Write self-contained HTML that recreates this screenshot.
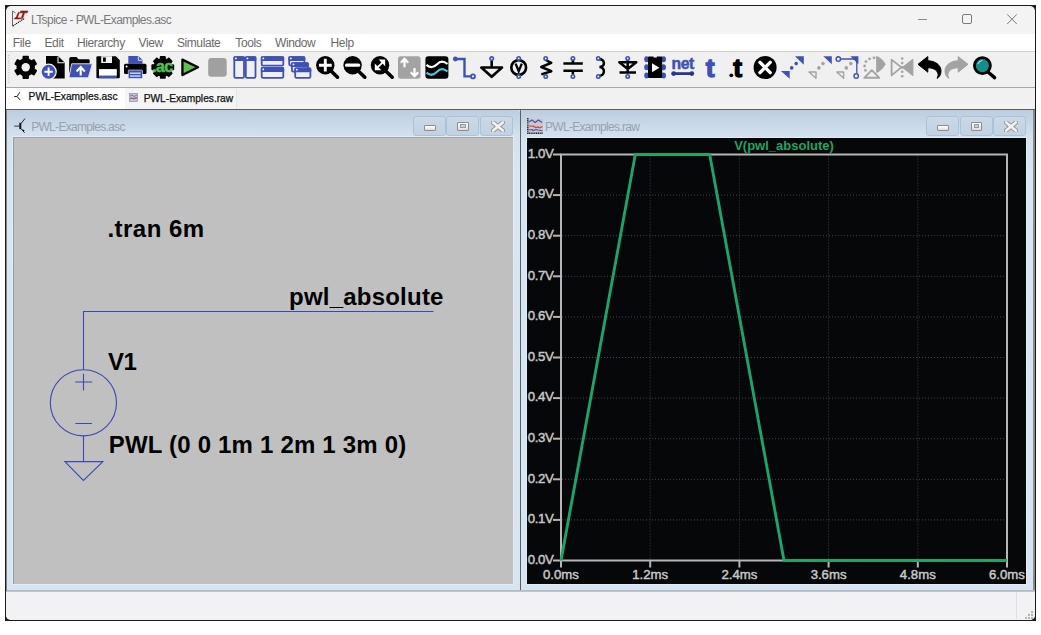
<!DOCTYPE html>
<html><head><meta charset="utf-8">
<style>
*{margin:0;padding:0;box-sizing:border-box}
html,body{width:1041px;height:635px;overflow:hidden;background:#fff;font-family:"Liberation Sans",sans-serif;position:relative}
.a{position:absolute}
.t{position:absolute;white-space:nowrap;line-height:1}
</style></head>
<body>
<!-- window frame -->
<div class="a" style="left:5px;top:5px;width:1031px;height:616px;background:#1c1c1c"></div>
<div class="a" style="left:6px;top:6px;width:1029px;height:614px;border-radius:5px;background:#f3f3f4"></div>
<div class="a" style="left:6px;top:34px;width:1029px;height:17px;background:#fff"></div>
<div class="a" style="left:6px;top:51px;width:1029px;height:1px;background:#d0d0d0"></div>
<div class="a" style="left:6px;top:52px;width:1029px;height:35px;background:#f0f0f0"></div>
<div class="a" style="left:6px;top:87px;width:1029px;height:1px;background:#a8a8a8"></div>
<div class="a" style="left:6px;top:88px;width:1029px;height:21px;background:#f1f1f1"></div>
<div class="a" style="left:6px;top:88px;width:119px;height:21px;background:#fefefe"></div>
<div class="a" style="left:125px;top:89px;width:112px;height:20px;background:#f5f5f5;border-right:1px solid #e6e6e6"></div>
<div class="a" style="left:6px;top:109px;width:1029px;height:1px;background:#5c5c5c"></div>
<!-- mdi children -->
<div class="a" style="left:6px;top:110px;width:514px;height:481px;background:linear-gradient(#bccde0 0px,#c9d8e8 14px,#d4e2f0 27px,#d8e6f4 60px,#d7e5f3);border-radius:2px 2px 0 0"></div>
<div class="a" style="left:520px;top:110px;width:1px;height:481px;background:#5e5e5e"></div>
<div class="a" style="left:521px;top:110px;width:513px;height:481px;background:linear-gradient(#bccde0 0px,#c9d8e8 14px,#d4e2f0 27px,#d8e6f4 60px,#d7e5f3);border-radius:2px 2px 0 0"></div>
<div class="a" style="left:1033px;top:110px;width:2px;height:481px;background:#8a8a8a"></div>
<div class="a" style="left:6px;top:590px;width:1029px;height:2px;background:linear-gradient(#aeb6be,#c6c9cc)"></div>
<div class="a" style="left:12px;top:136px;width:502px;height:449px;background:#e2ecf6"></div>
<div class="a" style="left:13px;top:137px;width:500px;height:447px;background:#c0c0c0;border-top:1px solid #a2a2a2;border-left:1px solid #999999"></div>
<div class="a" style="left:6px;top:110px;width:1px;height:481px;background:#858585"></div>
<div class="a" style="left:526px;top:137px;width:501px;height:448px;background:#e2ecf6"></div>
<div class="a" style="left:527px;top:138px;width:499px;height:446px;background:#050709"></div>
<!-- status bar -->
<div class="a" style="left:6px;top:592px;width:1029px;height:28px;background:#f2f2f4;border-radius:0 0 5px 5px"></div>
<div class="a" style="left:1016px;top:592px;width:1px;height:27px;background:#e0e0e0"></div><div class="a" style="left:1031px;top:611px;width:2px;height:2px;background:#b4b4b4"></div><div class="a" style="left:1028px;top:614px;width:2px;height:2px;background:#b4b4b4"></div><div class="a" style="left:1031px;top:614px;width:2px;height:2px;background:#b4b4b4"></div><div class="a" style="left:1025px;top:617px;width:2px;height:2px;background:#b4b4b4"></div><div class="a" style="left:1028px;top:617px;width:2px;height:2px;background:#b4b4b4"></div><div class="a" style="left:1031px;top:617px;width:2px;height:2px;background:#b4b4b4"></div>
<!-- title bar -->
<svg class="a" style="left:0;top:0" width="40" height="40">
  <path d="M12.5 26.3 V11 L15.6 13" fill="none" stroke="#6a6a6a" stroke-width="1"/>
  <path d="M12.8 26 L24.6 18.3" fill="none" stroke="#111" stroke-width="1.1" stroke-dasharray="1.3 0.7"/>
  <path d="M18.9 11.9 Q17.2 13.5 16.6 16.5 L14.2 18.9 L20.8 18.9 L21.2 17.9 L17.6 17.9 Q18.2 14.5 19.6 12.6 Z" fill="#9c1212" stroke="#9c1212" stroke-width="0.6" stroke-linejoin="round"/>
  <path d="M20.6 11 L28 11 L27.2 12.8 L24.6 12.8 L22.8 18.3 L21.3 18.3 L23.1 12.8 L20 12.8 Z" fill="#9c1212" stroke="#9c1212" stroke-width="0.6" stroke-linejoin="round"/>
</svg>
<div class="t" style="left:31px;top:14px;font-size:12px;color:#7a7a7a;letter-spacing:-0.58px">LTspice - PWL-Examples.asc</div>
<div class="a" style="left:917.5px;top:18.6px;width:9.5px;height:1px;background:#8a8a8a"></div>
<div class="a" style="left:962px;top:14px;width:9.6px;height:9.6px;border:1px solid #7a7a7a;border-radius:2px"></div>
<svg class="a" style="left:1006px;top:13px" width="12" height="12"><path d="M1.2 1.4 L10.8 11 M10.8 1.4 L1.2 11" stroke="#7a7a7a" stroke-width="1"/></svg>
<!-- menu -->
<div class="t" style="left:12.7px;top:36.6px;font-size:12px;color:#6a6a6a;letter-spacing:-0.3px">File</div>
<div class="t" style="left:44.4px;top:36.6px;font-size:12px;color:#6a6a6a;letter-spacing:-0.3px">Edit</div>
<div class="t" style="left:77px;top:36.6px;font-size:12px;color:#6a6a6a;letter-spacing:-0.4px">Hierarchy</div>
<div class="t" style="left:138.6px;top:36.6px;font-size:12px;color:#6a6a6a;letter-spacing:-0.4px">View</div>
<div class="t" style="left:176.9px;top:36.6px;font-size:12px;color:#6a6a6a;letter-spacing:-0.4px">Simulate</div>
<div class="t" style="left:235.3px;top:36.6px;font-size:12px;color:#6a6a6a;letter-spacing:-0.4px">Tools</div>
<div class="t" style="left:275px;top:36.6px;font-size:12px;color:#6a6a6a;letter-spacing:-0.4px">Window</div>
<div class="t" style="left:330.6px;top:36.6px;font-size:12px;color:#6a6a6a;letter-spacing:-0.4px">Help</div>
<!-- tabs -->
<svg class="a" style="left:13px;top:91px" width="10" height="10"><path d="M1.2 5.5 H4 M6.8 1.2 L4 5.5 L7.2 9" fill="none" stroke="#222" stroke-width="1"/></svg>
<div class="t" style="left:28.6px;top:92px;font-size:10.2px;color:#111;-webkit-text-stroke:0.25px #111">PWL-Examples.asc</div>
<svg class="a" style="left:129px;top:93px" width="9" height="9"><rect x="0.5" y="0.5" width="8" height="8" fill="#c8c8d0" stroke="#9a9aa8" stroke-width="0.8"/><path d="M1 3 L3 2 L5 3.5 L8 2 M1 6 L3 5 L5 6 L8 5" fill="none" stroke="#5060c0" stroke-width="0.8"/><path d="M1 5 L4 5.5 L8 4.5" fill="none" stroke="#d04040" stroke-width="0.8"/></svg>
<div class="t" style="left:143.7px;top:93.6px;font-size:10.2px;color:#111;-webkit-text-stroke:0.25px #111">PWL-Examples.raw</div>
<!-- child 1 title -->
<svg class="a" style="left:0;top:100px" width="40" height="40"><path d="M14.2 26.1 H19.5" stroke="#444" stroke-width="1.1"/><path d="M20.3 22.8 V29.2" stroke="#111" stroke-width="2"/><path d="M21 23.6 L25 18.5 M21 28.6 L24.6 32.8" stroke="#222" stroke-width="1"/><path d="M22.2 29.2 L24.6 30.2 L23.4 31.8 Z" fill="#111"/></svg>
<div class="t" style="left:31.2px;top:121px;font-size:12px;color:#97a1ab;letter-spacing:-0.7px">PWL-Examples.asc</div>
<!-- child 2 title -->
<svg class="a" style="left:527px;top:118px" width="16" height="16"><rect x="1" y="0.5" width="15" height="15" fill="#c9c9c9"/><path d="M0.8 0 V15.2 H16" fill="none" stroke="#222" stroke-width="1.4" stroke-dasharray="1.2 0.6"/><path d="M2 4 L5 2 L8 4.5 L11.5 2 L15 4.5" fill="none" stroke="#4a4ac8" stroke-width="1.1"/><path d="M2 8 L6 8.2 L9 9.5 L11 9 L13 9.8 L15.5 8.5" fill="none" stroke="#e03c3c" stroke-width="1.2"/><path d="M2 12 L5 11.5 L6 12.5 L9 11.5 L11 12 L15.5 12.8" fill="none" stroke="#4a4ac8" stroke-width="1.1"/></svg>
<div class="t" style="left:545px;top:121px;font-size:12px;color:#97a1ab;letter-spacing:-0.7px">PWL-Examples.raw</div>
<div class="a" style="left:413.0px;top:116.3px;width:33px;height:19.5px;border:1px solid #aec2d6;border-radius:3px;background:linear-gradient(#cad8e7,#c2d2e3)"></div>
<div class="a" style="left:446.3px;top:116.3px;width:33px;height:19.5px;border:1px solid #aec2d6;border-radius:3px;background:linear-gradient(#cad8e7,#c2d2e3)"></div>
<div class="a" style="left:479.6px;top:116.3px;width:33px;height:19.5px;border:1px solid #aec2d6;border-radius:3px;background:linear-gradient(#cad8e7,#c2d2e3)"></div>
<div class="a" style="left:424px;top:125px;width:12px;height:5.5px;border:1px solid #8d8d8d;border-radius:1px;background:linear-gradient(#fff,#dedede)"></div>
<div class="a" style="left:457.4px;top:121.6px;width:11.6px;height:9px;border:1px solid #8d8d8d;border-radius:1px;background:linear-gradient(#fff,#dedede)"></div>
<div class="a" style="left:460.4px;top:124.4px;width:5.6px;height:3.4px;border:1px solid #9a9a9a;background:#c3d2e2"></div>
<svg class="a" style="left:490.5px;top:121px" width="14" height="11"><path d="M2.2 1.5 L11.8 9.5 M11.8 1.5 L2.2 9.5" stroke="#8f8f8f" stroke-width="4.4" stroke-linecap="round"/><path d="M2.2 1.5 L11.8 9.5 M11.8 1.5 L2.2 9.5" stroke="#f2f2f2" stroke-width="2.8" stroke-linecap="round"/></svg>
<div class="a" style="left:926.4px;top:116.3px;width:33px;height:19.5px;border:1px solid #aec2d6;border-radius:3px;background:linear-gradient(#cad8e7,#c2d2e3)"></div>
<div class="a" style="left:959.5px;top:116.3px;width:33px;height:19.5px;border:1px solid #aec2d6;border-radius:3px;background:linear-gradient(#cad8e7,#c2d2e3)"></div>
<div class="a" style="left:992.6px;top:116.3px;width:33px;height:19.5px;border:1px solid #aec2d6;border-radius:3px;background:linear-gradient(#cad8e7,#c2d2e3)"></div>
<div class="a" style="left:937.4px;top:125px;width:12px;height:5.5px;border:1px solid #8d8d8d;border-radius:1px;background:linear-gradient(#fff,#dedede)"></div>
<div class="a" style="left:970.8px;top:121.6px;width:11.6px;height:9px;border:1px solid #8d8d8d;border-radius:1px;background:linear-gradient(#fff,#dedede)"></div>
<div class="a" style="left:973.8px;top:124.4px;width:5.6px;height:3.4px;border:1px solid #9a9a9a;background:#c3d2e2"></div>
<svg class="a" style="left:1003.9px;top:121px" width="14" height="11"><path d="M2.2 1.5 L11.8 9.5 M11.8 1.5 L2.2 9.5" stroke="#8f8f8f" stroke-width="4.4" stroke-linecap="round"/><path d="M2.2 1.5 L11.8 9.5 M11.8 1.5 L2.2 9.5" stroke="#f2f2f2" stroke-width="2.8" stroke-linecap="round"/></svg>
<svg class="a" style="left:0;top:0" width="1041" height="90"><rect x="8.3" y="55.00" width="1.2" height="0.9" fill="#bdbdbd"/><rect x="8.3" y="57.45" width="1.2" height="0.9" fill="#bdbdbd"/><rect x="8.3" y="59.90" width="1.2" height="0.9" fill="#bdbdbd"/><rect x="8.3" y="62.35" width="1.2" height="0.9" fill="#bdbdbd"/><rect x="8.3" y="64.80" width="1.2" height="0.9" fill="#bdbdbd"/><rect x="8.3" y="67.25" width="1.2" height="0.9" fill="#bdbdbd"/><rect x="8.3" y="69.70" width="1.2" height="0.9" fill="#bdbdbd"/><rect x="8.3" y="72.15" width="1.2" height="0.9" fill="#bdbdbd"/><rect x="8.3" y="74.60" width="1.2" height="0.9" fill="#bdbdbd"/><rect x="8.3" y="77.05" width="1.2" height="0.9" fill="#bdbdbd"/><rect x="8.3" y="79.50" width="1.2" height="0.9" fill="#bdbdbd"/><rect x="8.3" y="81.95" width="1.2" height="0.9" fill="#bdbdbd"/><circle cx="25.7" cy="67.3" r="9.2" fill="#000"/><rect x="22.5" y="55.699999999999996" width="6.4" height="11.6" rx="1" fill="#000" transform="rotate(0.0 25.7 67.3)"/><rect x="22.5" y="55.699999999999996" width="6.4" height="11.6" rx="1" fill="#000" transform="rotate(60.0 25.7 67.3)"/><rect x="22.5" y="55.699999999999996" width="6.4" height="11.6" rx="1" fill="#000" transform="rotate(120.0 25.7 67.3)"/><rect x="22.5" y="55.699999999999996" width="6.4" height="11.6" rx="1" fill="#000" transform="rotate(180.0 25.7 67.3)"/><rect x="22.5" y="55.699999999999996" width="6.4" height="11.6" rx="1" fill="#000" transform="rotate(240.0 25.7 67.3)"/><rect x="22.5" y="55.699999999999996" width="6.4" height="11.6" rx="1" fill="#000" transform="rotate(300.0 25.7 67.3)"/><circle cx="25.7" cy="67.3" r="4.2" fill="#f0f0f0"/><path d="M46 56 L58 56 L64.7 62.5 L64.7 78.5 L46 78.5 Z" fill="#000"/><path d="M58 56.5 L58 62.8 L64.5 62.8" fill="none" stroke="#f0f0f0" stroke-width="1.1"/><circle cx="48.6" cy="71.8" r="7.6" fill="#3f51b5" stroke="#f0f0f0" stroke-width="1.3"/><path d="M48.6 67.6 V76 M44.4 71.8 H52.8" stroke="#fff" stroke-width="1.9"/><path d="M69.2 59 Q69.2 57 71 57 L76.5 57 L78.5 59.3 L88.5 59.3 Q89.7 59.3 89.7 60.5 L89.7 63.8 L72 63.8 L69.2 74 Z" fill="#000"/><path d="M71.6 63.8 L92.3 63.8 L88.3 77.7 L69 77.7 Z" fill="#3f51b5" stroke="#f0f0f0" stroke-width="0.8" stroke-linejoin="round"/><path d="M80.7 75.5 V68.5 M76.6 71.5 L80.7 67 L84.8 71.5" fill="none" stroke="#fff" stroke-width="2.1" stroke-linejoin="miter"/><path d="M97.8 56.2 L115.8 56.2 L119.8 60.2 L119.8 77 Q119.8 78.3 118.5 78.3 L97.7 78.3 Q96.4 78.3 96.4 77 L96.4 57.6 Q96.4 56.2 97.8 56.2 Z" fill="#000"/><rect x="101.2" y="56.2" width="10.8" height="6.8" fill="#f0f0f0"/><rect x="103" y="57.5" width="2.8" height="4.3" fill="#000"/><rect x="99" y="69.1" width="17.8" height="6.7" fill="#fff"/><rect x="99" y="75.8" width="17.8" height="2.4" fill="#3f51b5"/><path d="M128.3 56 L138.5 56 L142.5 60 L142.5 63.8 L128.3 63.8 Z" fill="#3f51b5"/><path d="M138.3 56.3 L138.3 60.3 L142.3 60.3" fill="none" stroke="#f0f0f0" stroke-width="0.9"/><rect x="124" y="63.7" width="22.5" height="10.2" rx="1.5" fill="#000"/><circle cx="126.6" cy="66.6" r="1" fill="#fff"/><rect x="128.3" y="70" width="14.2" height="8.5" rx="0.8" fill="#3f51b5" stroke="#f0f0f0" stroke-width="0.6"/><rect x="130" y="72.6" width="10.6" height="1.1" fill="#fff"/><rect x="130" y="75.5" width="10.6" height="1.1" fill="#fff"/><circle cx="162.8" cy="67.3" r="9.4" fill="#000"/><rect x="159.8" y="55.9" width="6" height="11.4" rx="1" fill="#000" transform="rotate(0.0 162.8 67.3)"/><rect x="159.8" y="55.9" width="6" height="11.4" rx="1" fill="#000" transform="rotate(45.0 162.8 67.3)"/><rect x="159.8" y="55.9" width="6" height="11.4" rx="1" fill="#000" transform="rotate(90.0 162.8 67.3)"/><rect x="159.8" y="55.9" width="6" height="11.4" rx="1" fill="#000" transform="rotate(135.0 162.8 67.3)"/><rect x="159.8" y="55.9" width="6" height="11.4" rx="1" fill="#000" transform="rotate(180.0 162.8 67.3)"/><rect x="159.8" y="55.9" width="6" height="11.4" rx="1" fill="#000" transform="rotate(225.0 162.8 67.3)"/><rect x="159.8" y="55.9" width="6" height="11.4" rx="1" fill="#000" transform="rotate(270.0 162.8 67.3)"/><rect x="159.8" y="55.9" width="6" height="11.4" rx="1" fill="#000" transform="rotate(315.0 162.8 67.3)"/><text x="162.3" y="71.6" font-family="Liberation Sans" font-weight="bold" font-size="15.8" fill="#4ec14e" stroke="#4ec14e" stroke-width="0.6" text-anchor="middle" letter-spacing="-0.7">.ac</text><path d="M182.4 59.6 L198 67.3 L182.4 75 Z" fill="#5ec04a" stroke="#000" stroke-width="2.3" stroke-linejoin="round"/><rect x="208.2" y="58.1" width="18.5" height="18.6" rx="3.2" fill="#a0a0a0"/><rect x="234.3" y="57.1" width="9.7" height="20.8" rx="1.4" fill="#f0f0f0" stroke="#3f51b5" stroke-width="1.8"/><rect x="233.4" y="56.2" width="11.5" height="4.8" rx="1.4" fill="#3f51b5"/><circle cx="235.9" cy="58.400000000000006" r="0.9" fill="#fff"/><rect x="245.8" y="57.1" width="9.7" height="20.8" rx="1.4" fill="#f0f0f0" stroke="#3f51b5" stroke-width="1.8"/><rect x="244.9" y="56.2" width="11.5" height="4.8" rx="1.4" fill="#3f51b5"/><circle cx="247.4" cy="58.400000000000006" r="0.9" fill="#fff"/><rect x="261.7" y="57.1" width="21.599999999999998" height="8.6" rx="1.4" fill="#f0f0f0" stroke="#3f51b5" stroke-width="1.8"/><rect x="260.8" y="56.2" width="23.4" height="4.8" rx="1.4" fill="#3f51b5"/><circle cx="263.3" cy="58.400000000000006" r="0.9" fill="#fff"/><rect x="261.7" y="68.0" width="21.599999999999998" height="9.899999999999999" rx="1.4" fill="#f0f0f0" stroke="#3f51b5" stroke-width="1.8"/><rect x="260.8" y="67.1" width="23.4" height="4.8" rx="1.4" fill="#3f51b5"/><circle cx="263.3" cy="69.3" r="0.9" fill="#fff"/><rect x="289.2" y="57.1" width="15.2" height="8.399999999999999" rx="1.4" fill="#f0f0f0" stroke="#3f51b5" stroke-width="1.8"/><rect x="288.3" y="56.2" width="17" height="4.8" rx="1.4" fill="#3f51b5"/><circle cx="290.8" cy="58.400000000000006" r="0.9" fill="#fff"/><rect x="291.9" y="63.1" width="16.0" height="8.5" rx="1.4" fill="#f0f0f0" stroke="#3f51b5" stroke-width="1.8"/><rect x="291" y="62.2" width="17.8" height="4.8" rx="1.4" fill="#3f51b5"/><circle cx="293.5" cy="64.4" r="0.9" fill="#fff"/><rect x="295.2" y="68.4" width="15.2" height="9.5" rx="1.4" fill="#f0f0f0" stroke="#3f51b5" stroke-width="1.8"/><rect x="294.3" y="67.5" width="17" height="4.8" rx="1.4" fill="#3f51b5"/><circle cx="296.8" cy="69.7" r="0.9" fill="#fff"/><circle cx="325.3" cy="65.2" r="9.2" fill="#000"/><path d="M331.3 71.2 L337.5 77.2" stroke="#000" stroke-width="3.6" stroke-linecap="round"/><path d="M325.3 58.8 V71.6 M318.9 65.2 H331.7" stroke="#fff" stroke-width="2.9"/><circle cx="352.6" cy="65.2" r="9.2" fill="#000"/><path d="M358.6 71.2 L364.8 77.2" stroke="#000" stroke-width="3.6" stroke-linecap="round"/><path d="M346.6 65.2 H358.6" stroke="#fff" stroke-width="3.2" stroke-linecap="round"/><circle cx="380" cy="65.2" r="9.2" fill="#000"/><path d="M386 71.2 L392.2 77.2" stroke="#000" stroke-width="3.6" stroke-linecap="round"/><path d="M376.6 68.4 L383.4 61.6" stroke="#fff" stroke-width="2"/><path d="M374.8 63.6 L374.8 70.2 L381.4 70.2 Z M385.2 66.2 L385.2 59.6 L378.6 59.6 Z" fill="#fff"/><rect x="398" y="56.2" width="22.6" height="22.6" rx="2.8" fill="#a3a3a3"/><path d="M404.5 67.2 V59.5 M400.8 62.8 L404.5 58.8 L408.2 62.8" fill="none" stroke="#fff" stroke-width="2.2"/><path d="M414.5 68 V75.5 M410.8 72.2 L414.5 76.2 L418.2 72.2" fill="none" stroke="#fff" stroke-width="2.2"/><rect x="425.4" y="56.2" width="23" height="22.6" rx="3" fill="#000"/><path d="M426.5 64.8 C430.5 68.3 433.5 68 437 64.3 C440.5 60.5 443.5 60.5 447.5 64" fill="none" stroke="#fff" stroke-width="2.2"/><path d="M426.5 72.6 C430.5 76 433.5 75.7 437 71.8 C440.5 68 443.5 68 447.5 71.5" fill="none" stroke="#4fc3d9" stroke-width="2.2"/><path d="M455.3 59 H464.5 V76.4 H471" fill="none" stroke="#3f51b5" stroke-width="2.4"/><circle cx="455.3" cy="59" r="2.4" fill="#3f51b5"/><circle cx="473" cy="76.4" r="2" fill="#f0f0f0" stroke="#3f51b5" stroke-width="1.7"/><path d="M491.7 60.4 V67.5 M481.3 67.5 H502 L491.7 76.8 Z" fill="none" stroke="#000" stroke-width="2.6" stroke-linejoin="round"/><circle cx="491.7" cy="58.6" r="1.7" fill="#f0f0f0" stroke="#3f51b5" stroke-width="1.6"/><circle cx="518.7" cy="67.5" r="7.4" fill="none" stroke="#000" stroke-width="2.6"/><path d="M515.6 63.6 L518.7 71.2 L521.8 63.6" fill="none" stroke="#000" stroke-width="2.3"/><circle cx="518.7" cy="58.4" r="1.7" fill="#f0f0f0" stroke="#3f51b5" stroke-width="1.6"/><circle cx="518.7" cy="76.6" r="1.7" fill="#f0f0f0" stroke="#3f51b5" stroke-width="1.6"/><path d="M545.7 60 L551.3 62.8 L541.3 67 L551.3 71.2 L541.3 74.4" fill="none" stroke="#000" stroke-width="2.5" stroke-linejoin="round"/><circle cx="545.7" cy="58.4" r="1.7" fill="#f0f0f0" stroke="#3f51b5" stroke-width="1.6"/><circle cx="545.7" cy="76.6" r="1.7" fill="#f0f0f0" stroke="#3f51b5" stroke-width="1.6"/><path d="M572.9 60 V63.5 M563.4 63.5 H582.8 M563.4 70.7 H582.8 M572.9 70.7 V74.4" fill="none" stroke="#000" stroke-width="2.5"/><circle cx="572.9" cy="58.4" r="1.7" fill="#f0f0f0" stroke="#3f51b5" stroke-width="1.6"/><circle cx="572.9" cy="76.4" r="1.7" fill="#f0f0f0" stroke="#3f51b5" stroke-width="1.6"/><path d="M598.5 59 C605 59 606 66.5 599.5 67 C606 67.5 605 76 598.5 76" fill="none" stroke="#000" stroke-width="2.5"/><circle cx="598.3" cy="58.4" r="1.7" fill="#f0f0f0" stroke="#3f51b5" stroke-width="1.6"/><circle cx="598.3" cy="76.4" r="1.7" fill="#f0f0f0" stroke="#3f51b5" stroke-width="1.6"/><path d="M627.7 60 V72.4 M619.3 62.3 H636.3 L627.7 69 Z M619.5 72.4 H636" fill="none" stroke="#000" stroke-width="2.5" stroke-linejoin="round"/><circle cx="627.7" cy="58.4" r="1.7" fill="#f0f0f0" stroke="#3f51b5" stroke-width="1.6"/><circle cx="627.7" cy="76.4" r="1.7" fill="#f0f0f0" stroke="#3f51b5" stroke-width="1.6"/><ellipse cx="646.6" cy="59.2" rx="2.4" ry="3" fill="#3f51b5"/><ellipse cx="663.6" cy="59.2" rx="2.4" ry="3" fill="#3f51b5"/><ellipse cx="646.6" cy="67.3" rx="2.4" ry="3" fill="#3f51b5"/><ellipse cx="663.6" cy="67.3" rx="2.4" ry="3" fill="#3f51b5"/><ellipse cx="646.6" cy="75.4" rx="2.4" ry="3" fill="#3f51b5"/><ellipse cx="663.6" cy="75.4" rx="2.4" ry="3" fill="#3f51b5"/><path d="M649 56.6 H653.5 V57.6 H656.8 V56.6 H661.2 Q662.2 56.6 662.2 57.6 V77 Q662.2 78 661.2 78 H649 Q648 78 648 77 V57.6 Q648 56.6 649 56.6 Z" fill="#000"/><path d="M652 63.3 L659.4 67.8 L652 72.3 Z" fill="#fff"/><text x="682.7" y="69.2" font-family="Liberation Sans" font-weight="bold" font-size="15.8" fill="#3f51b5" stroke="#3f51b5" stroke-width="0.5" text-anchor="middle" letter-spacing="-0.4">net</text><path d="M673.6 73.6 H692" stroke="#283593" stroke-width="2.8"/><circle cx="673.6" cy="73.6" r="2.4" fill="#283593"/><circle cx="691.8" cy="73.6" r="2.4" fill="#283593"/><text x="710.2" y="76.8" font-family="Liberation Sans" font-weight="bold" font-size="26.5" fill="#3f51b5" stroke="#3f51b5" stroke-width="1.3" text-anchor="middle">t</text><text x="737.6" y="76.8" font-family="Liberation Sans" font-weight="bold" font-size="26.5" fill="#000" stroke="#000" stroke-width="1.3" text-anchor="middle">t</text><circle cx="731.3" cy="75.3" r="1.9" fill="#000"/><circle cx="765.1" cy="67.5" r="11.5" fill="#000"/><path d="M760 62.4 L770.2 72.6 M770.2 62.4 L760 72.6" stroke="#fff" stroke-width="3.4" stroke-linecap="round"/><path d="M795 56.2 H803.8 V64.7 Z M780.9 71.1 H789.7 V78.8 Z" fill="#3f51b5"/><circle cx="796.2" cy="63.6" r="1.8" fill="#3f51b5"/><circle cx="791.7" cy="67.9" r="1.8" fill="#3f51b5"/><path d="M823.3 56.2 H831.8 V64.3 Z" fill="#3f51b5"/><circle cx="823" cy="63.6" r="1.8" fill="#a3a3a3"/><circle cx="818.9" cy="67.9" r="1.8" fill="#a3a3a3"/><path d="M809 72 H816 V78.2 Z" fill="none" stroke="#a3a3a3" stroke-width="1.4" stroke-linejoin="round"/><path d="M840.5 59 H856.8 V73.8" fill="none" stroke="#3f51b5" stroke-width="1.3"/><path d="M850.4 56.2 H858.4 V64.3 Z" fill="#3f51b5"/><circle cx="838.3" cy="59" r="2.2" fill="#f0f0f0" stroke="#3f51b5" stroke-width="1.4"/><circle cx="856.2" cy="76" r="2.2" fill="#f0f0f0" stroke="#3f51b5" stroke-width="1.4"/><circle cx="850.8" cy="63.6" r="1.8" fill="#a3a3a3"/><circle cx="846.3" cy="67.9" r="1.8" fill="#a3a3a3"/><path d="M836.8 72 H843.6 V78.2 Z" fill="none" stroke="#a3a3a3" stroke-width="1.4" stroke-linejoin="round"/><path d="M876.1 56.1 Q881 57 885.8 64.2 Q881 71.5 876.1 72.9 Z" fill="#a3a3a3"/><circle cx="874" cy="57.8" r="1.4" fill="#a3a3a3"/><circle cx="869.6" cy="58.8" r="1.4" fill="#a3a3a3"/><circle cx="866" cy="61.6" r="1.4" fill="#a3a3a3"/><circle cx="864.6" cy="66" r="1.4" fill="#a3a3a3"/><circle cx="865.5" cy="70.3" r="1.4" fill="#a3a3a3"/><path d="M864.3 77.8 L871.8 70.2 L879.3 77.8 Z" fill="none" stroke="#a3a3a3" stroke-width="1.9" stroke-linejoin="round"/><path d="M891.6 59.6 V75.4 L901.4 67.4 Z" fill="none" stroke="#a3a3a3" stroke-width="1.8" stroke-linejoin="round"/><path d="M902.6 67.4 L912.8 59.6 V75.4 Z" fill="#a3a3a3" stroke="#a3a3a3" stroke-width="1.2" stroke-linejoin="round"/><circle cx="902.2" cy="58.5" r="1.3" fill="#a3a3a3"/><circle cx="902.2" cy="63.1" r="1.3" fill="#a3a3a3"/><circle cx="902.2" cy="67.4" r="1.3" fill="#a3a3a3"/><circle cx="902.2" cy="71.7" r="1.3" fill="#a3a3a3"/><circle cx="902.2" cy="76.3" r="1.3" fill="#a3a3a3"/><path d="M918 64.3 L927.8 56.6 L927.8 60.8 C935 60.8 941 65 941 71 C941 74.5 939.5 77 937 78.4 C938 76.6 938.5 75 937.8 73 C936.8 70 933 67.8 927.8 67.8 L927.8 72.2 Z" fill="#000" stroke="#000" stroke-width="1" stroke-linejoin="round"/><g transform="translate(1886 0) scale(-1 1)"><path d="M918 64.3 L927.8 56.6 L927.8 60.8 C935 60.8 941 65 941 71 C941 74.5 939.5 77 937 78.4 C938 76.6 938.5 75 937.8 73 C936.8 70 933 67.8 927.8 67.8 L927.8 72.2 Z" fill="#a3a3a3" stroke="#a3a3a3" stroke-width="1" stroke-linejoin="round"/></g><path d="M988 72 L994.6 77.6" stroke="#000" stroke-width="3.4" stroke-linecap="round"/><circle cx="982.4" cy="65.6" r="8" fill="#168c8c" stroke="#000" stroke-width="2.8"/><path d="M978.3 63.6 A4.8 4.8 0 0 1 982 60.4" fill="none" stroke="#7fe0e0" stroke-width="1.3" stroke-linecap="round"/></svg>
<svg class="a" style="left:0;top:0" width="1041" height="635"><line x1="650.2" y1="155.5" x2="650.2" y2="559.5" stroke="#454545" stroke-width="1" stroke-dasharray="1 2"/><line x1="739.4" y1="155.5" x2="739.4" y2="559.5" stroke="#454545" stroke-width="1" stroke-dasharray="1 2"/><line x1="828.6" y1="155.5" x2="828.6" y2="559.5" stroke="#454545" stroke-width="1" stroke-dasharray="1 2"/><line x1="917.8" y1="155.5" x2="917.8" y2="559.5" stroke="#454545" stroke-width="1" stroke-dasharray="1 2"/><line x1="562" y1="519.9" x2="1006" y2="519.9" stroke="#454545" stroke-width="1" stroke-dasharray="1 2"/><line x1="562" y1="479.3" x2="1006" y2="479.3" stroke="#454545" stroke-width="1" stroke-dasharray="1 2"/><line x1="562" y1="438.7" x2="1006" y2="438.7" stroke="#454545" stroke-width="1" stroke-dasharray="1 2"/><line x1="562" y1="398.1" x2="1006" y2="398.1" stroke="#454545" stroke-width="1" stroke-dasharray="1 2"/><line x1="562" y1="357.5" x2="1006" y2="357.5" stroke="#454545" stroke-width="1" stroke-dasharray="1 2"/><line x1="562" y1="316.9" x2="1006" y2="316.9" stroke="#454545" stroke-width="1" stroke-dasharray="1 2"/><line x1="562" y1="276.3" x2="1006" y2="276.3" stroke="#454545" stroke-width="1" stroke-dasharray="1 2"/><line x1="562" y1="235.7" x2="1006" y2="235.7" stroke="#454545" stroke-width="1" stroke-dasharray="1 2"/><line x1="562" y1="195.1" x2="1006" y2="195.1" stroke="#454545" stroke-width="1" stroke-dasharray="1 2"/><rect x="561" y="154.5" width="446" height="406.0" fill="none" stroke="#b6b6b6" stroke-width="2"/><line x1="553" y1="560.5" x2="561" y2="560.5" stroke="#b6b6b6" stroke-width="2"/><text x="553.5" y="563.7" text-anchor="end" font-family="Liberation Sans" font-size="13.2" fill="#c8c8c8" stroke="#c8c8c8" stroke-width="0.45" letter-spacing="-0.35">0.0V</text><line x1="553" y1="519.9" x2="561" y2="519.9" stroke="#b6b6b6" stroke-width="2"/><text x="553.5" y="523.1" text-anchor="end" font-family="Liberation Sans" font-size="13.2" fill="#c8c8c8" stroke="#c8c8c8" stroke-width="0.45" letter-spacing="-0.35">0.1V</text><line x1="553" y1="479.3" x2="561" y2="479.3" stroke="#b6b6b6" stroke-width="2"/><text x="553.5" y="482.5" text-anchor="end" font-family="Liberation Sans" font-size="13.2" fill="#c8c8c8" stroke="#c8c8c8" stroke-width="0.45" letter-spacing="-0.35">0.2V</text><line x1="553" y1="438.7" x2="561" y2="438.7" stroke="#b6b6b6" stroke-width="2"/><text x="553.5" y="441.9" text-anchor="end" font-family="Liberation Sans" font-size="13.2" fill="#c8c8c8" stroke="#c8c8c8" stroke-width="0.45" letter-spacing="-0.35">0.3V</text><line x1="553" y1="398.1" x2="561" y2="398.1" stroke="#b6b6b6" stroke-width="2"/><text x="553.5" y="401.3" text-anchor="end" font-family="Liberation Sans" font-size="13.2" fill="#c8c8c8" stroke="#c8c8c8" stroke-width="0.45" letter-spacing="-0.35">0.4V</text><line x1="553" y1="357.5" x2="561" y2="357.5" stroke="#b6b6b6" stroke-width="2"/><text x="553.5" y="360.7" text-anchor="end" font-family="Liberation Sans" font-size="13.2" fill="#c8c8c8" stroke="#c8c8c8" stroke-width="0.45" letter-spacing="-0.35">0.5V</text><line x1="553" y1="316.9" x2="561" y2="316.9" stroke="#b6b6b6" stroke-width="2"/><text x="553.5" y="320.1" text-anchor="end" font-family="Liberation Sans" font-size="13.2" fill="#c8c8c8" stroke="#c8c8c8" stroke-width="0.45" letter-spacing="-0.35">0.6V</text><line x1="553" y1="276.3" x2="561" y2="276.3" stroke="#b6b6b6" stroke-width="2"/><text x="553.5" y="279.5" text-anchor="end" font-family="Liberation Sans" font-size="13.2" fill="#c8c8c8" stroke="#c8c8c8" stroke-width="0.45" letter-spacing="-0.35">0.7V</text><line x1="553" y1="235.7" x2="561" y2="235.7" stroke="#b6b6b6" stroke-width="2"/><text x="553.5" y="238.9" text-anchor="end" font-family="Liberation Sans" font-size="13.2" fill="#c8c8c8" stroke="#c8c8c8" stroke-width="0.45" letter-spacing="-0.35">0.8V</text><line x1="553" y1="195.1" x2="561" y2="195.1" stroke="#b6b6b6" stroke-width="2"/><text x="553.5" y="198.3" text-anchor="end" font-family="Liberation Sans" font-size="13.2" fill="#c8c8c8" stroke="#c8c8c8" stroke-width="0.45" letter-spacing="-0.35">0.9V</text><line x1="553" y1="154.5" x2="561" y2="154.5" stroke="#b6b6b6" stroke-width="2"/><text x="553.5" y="157.7" text-anchor="end" font-family="Liberation Sans" font-size="13.2" fill="#c8c8c8" stroke="#c8c8c8" stroke-width="0.45" letter-spacing="-0.35">1.0V</text><line x1="561.0" y1="560.5" x2="561.0" y2="567.5" stroke="#b6b6b6" stroke-width="2"/><text x="561.0" y="579" text-anchor="middle" font-family="Liberation Sans" font-size="13.2" fill="#c8c8c8" stroke="#c8c8c8" stroke-width="0.45">0.0ms</text><line x1="650.2" y1="560.5" x2="650.2" y2="567.5" stroke="#b6b6b6" stroke-width="2"/><text x="650.2" y="579" text-anchor="middle" font-family="Liberation Sans" font-size="13.2" fill="#c8c8c8" stroke="#c8c8c8" stroke-width="0.45">1.2ms</text><line x1="739.4" y1="560.5" x2="739.4" y2="567.5" stroke="#b6b6b6" stroke-width="2"/><text x="739.4" y="579" text-anchor="middle" font-family="Liberation Sans" font-size="13.2" fill="#c8c8c8" stroke="#c8c8c8" stroke-width="0.45">2.4ms</text><line x1="828.6" y1="560.5" x2="828.6" y2="567.5" stroke="#b6b6b6" stroke-width="2"/><text x="828.6" y="579" text-anchor="middle" font-family="Liberation Sans" font-size="13.2" fill="#c8c8c8" stroke="#c8c8c8" stroke-width="0.45">3.6ms</text><line x1="917.8" y1="560.5" x2="917.8" y2="567.5" stroke="#b6b6b6" stroke-width="2"/><text x="917.8" y="579" text-anchor="middle" font-family="Liberation Sans" font-size="13.2" fill="#c8c8c8" stroke="#c8c8c8" stroke-width="0.45">4.8ms</text><line x1="1007.0" y1="560.5" x2="1007.0" y2="567.5" stroke="#b6b6b6" stroke-width="2"/><text x="1007.0" y="579" text-anchor="middle" font-family="Liberation Sans" font-size="13.2" fill="#c8c8c8" stroke="#c8c8c8" stroke-width="0.45">6.0ms</text><polyline points="561.0,560.5 635.3,154.5 709.7,154.5 784.0,560.5 1007.0,560.5" fill="none" stroke="#1ea46a" stroke-width="2.9" stroke-linejoin="round"/><text x="784" y="150" text-anchor="middle" font-family="Liberation Sans" font-weight="bold" font-size="13" fill="#1fa463">V(pwl_absolute)</text></svg>
<svg class="a" style="left:0;top:0" width="1041" height="635"><path d="M433.5 311.5 H83.5 V369.7" fill="none" stroke="#3c46b4" stroke-width="1.1"/><circle cx="83.4" cy="402.8" r="33.1" fill="none" stroke="#3c46b4" stroke-width="1.1"/><path d="M75.2 382 H92.2 M83.5 373.7 V390.5 M75.4 423.5 H91.9 M83.5 436 V461.6 M64.9 461.6 H102.9 L83.4 480.5 Z" fill="none" stroke="#3c46b4" stroke-width="1.1"/><text x="107.5" y="236.9" font-family="Liberation Sans" font-weight="bold" font-size="24" fill="#000" letter-spacing="0.45">.tran 6m</text><text x="289" y="305.4" font-family="Liberation Sans" font-weight="bold" font-size="24" fill="#000" letter-spacing="0.22">pwl_absolute</text><text x="108" y="369.7" font-family="Liberation Sans" font-weight="bold" font-size="24" fill="#000" letter-spacing="-0.5">V1</text><text x="108.8" y="452.9" font-family="Liberation Sans" font-weight="bold" font-size="24" fill="#000" letter-spacing="0.19">PWL (0 0 1m 1 2m 1 3m 0)</text></svg>
</body></html>
